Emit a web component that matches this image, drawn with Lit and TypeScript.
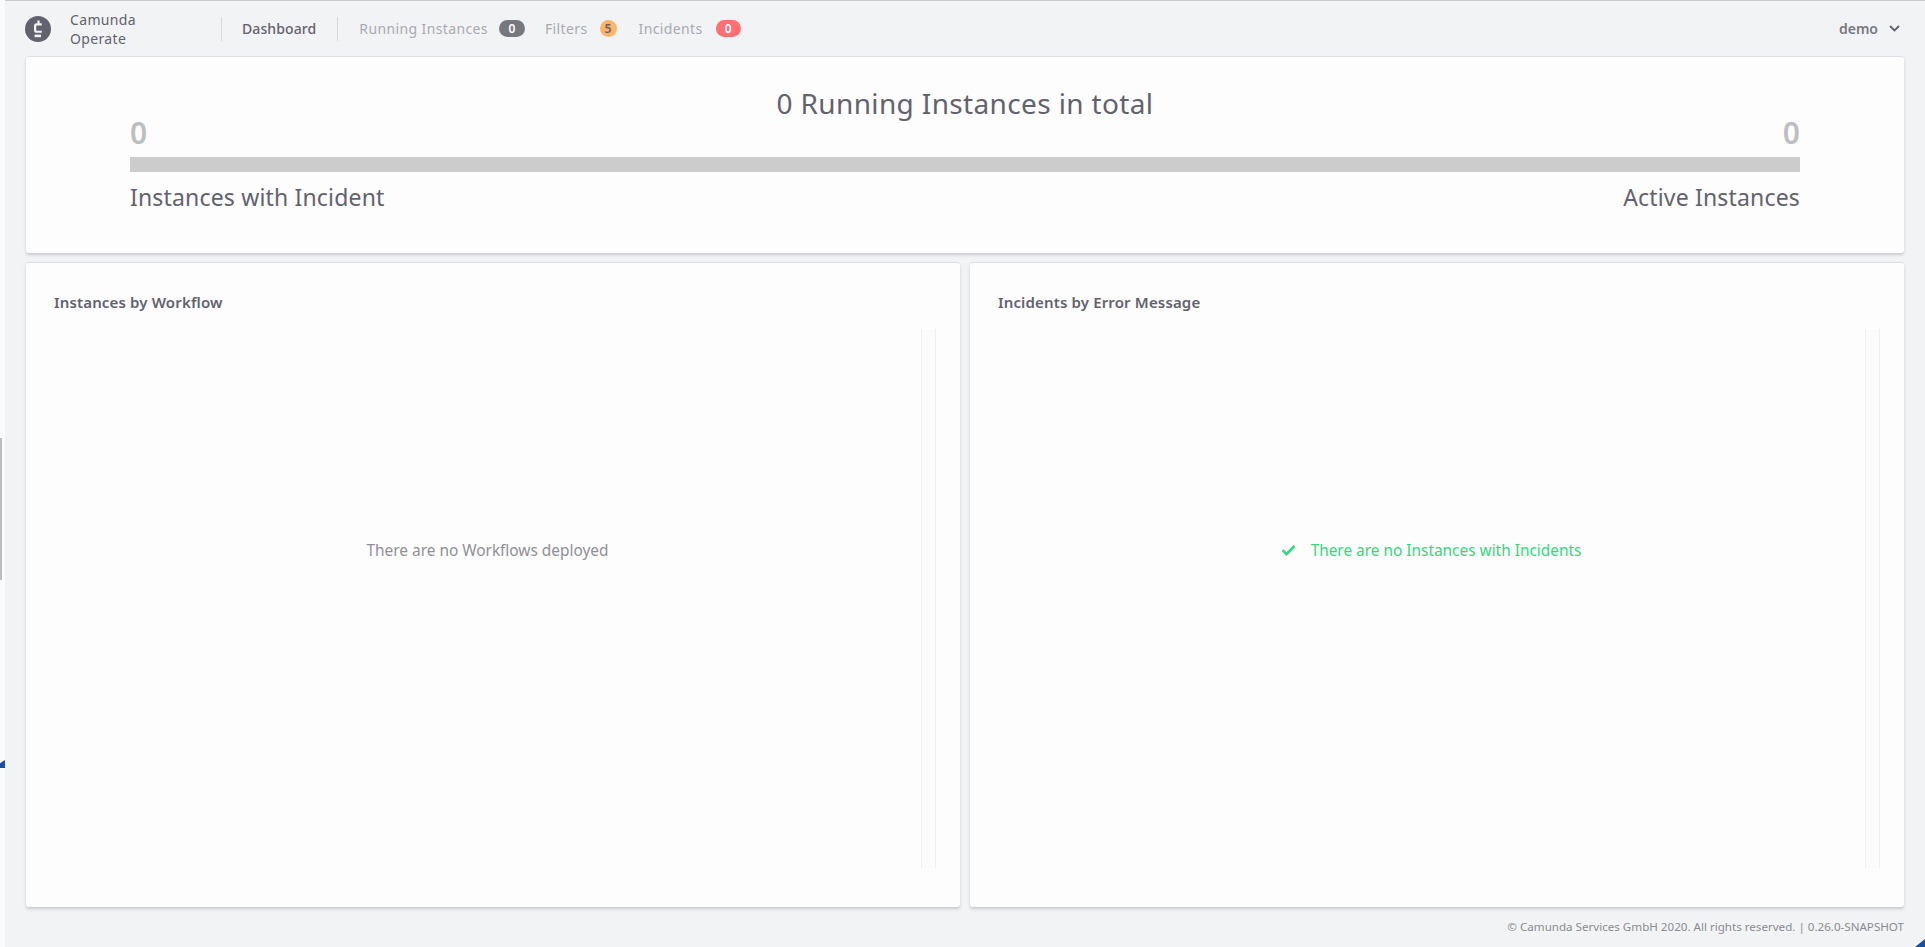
import { LitElement, html, css } from "lit";
import { customElement } from "lit/decorators.js";

@customElement("app-root")
export class AppRoot extends LitElement {
  static styles = css`
    :host { display: block; width: 1925px; height: 947px; overflow: hidden; position: relative; background: #fbfbfc; font-family: "Noto Sans", Roboto, sans-serif; color: #62626e; }
    * { box-sizing: border-box; }
    .window { margin-left: 5px; height: 947px; border-top: 1px solid #c9cacd; background: #f2f3f5; display: flex; flex-direction: column; padding: 0 21px; }
    header { height: 55px; display: flex; align-items: center; font-size: 14px; flex: none; }
    .logo { width: 26px; height: 26px; margin: 0 0 0 -1px; flex: none; display: block; }
    .brand { margin-left: 19px; width: 151px; line-height: 19px; font-size: 14px; letter-spacing: .35px; color: #62626e; }
    .sep { width: 1px; height: 24px; background: #d7d8dc; flex: none; }
    .dash { font-size: 14px; font-weight: 500; margin: 0 21px 0 20px; letter-spacing: .1px; color: #62626e; }
    .link { color: #a9aab1; letter-spacing: .38px; }
    .first { margin-left: 21px; }
    .badge { height: 17px; border-radius: 9px; display: flex; align-items: center; justify-content: center; font-size: 12px; font-weight: 600; color: #fff; flex: none; }
    .b1 { width: 26px; background: #77787d; margin-left: 11px; margin-right: 20px; }
    .b2 { width: 17px; background: #ffb366; color: #62626e; margin-left: 12px; margin-right: 22px; }
    .b3 { width: 25px; background: #ff6e72; margin-left: 13px; }
    .user { margin-left: auto; display: flex; align-items: center; gap: 11px; font-weight: 600; font-size: 14px; color: #77787f; padding-right: 4px; }
    .user svg { width: 11px; height: 7px; display: block; }
    main { display: flex; flex-direction: column; gap: 9px; flex: none; }
    .card { background: #fdfdfd; border-radius: 3px; border-top: 1px solid #dcdfe8; box-shadow: 0 2px 3px rgba(80, 85, 100, .25); }
    .summary { height: 197px; padding: 27px 104px 0 104px; }
    .title { text-align: center; font-size: 28px; line-height: 38px; letter-spacing: .36px; color: #62626e; }
    .nums { display: flex; justify-content: space-between; font-size: 30px; font-weight: 600; line-height: 32px; color: #bdbec1; margin-top: -5px; }
    .bar { height: 15px; background: #cccccd; margin-top: 8px; }
    .labels { display: flex; justify-content: space-between; font-size: 23px; line-height: 30px; letter-spacing: .17px; margin-top: 10px; color: #62626e; }
    .row { display: flex; gap: 10px; height: 645px; }
    .panel { flex: 1; position: relative; padding: 29px 0 0 28px; }
    h2 { margin: 0; font-size: 15px; font-weight: 600; line-height: 20px; letter-spacing: .15px; color: #62626e; }
    .track { position: absolute; top: 66px; right: 24px; width: 15px; height: 539px; background: #fbfbfb; border-left: 1px solid #efeff1; border-right: 1px solid #efeff1; }
    .msg { position: absolute; left: 0; right: 0; top: 275px; height: 24px; display: flex; justify-content: center; align-items: center; font-size: 15.4px; }
    .grey { color: #8f9096; padding-right: 11px; }
    .ok { color: #34d97b; gap: 15px; padding-right: 12px; }
    .ok svg { width: 15px; height: 12px; display: block; }
    footer { text-align: right; font-size: 11.6px; line-height: 16px; margin-top: 12px; color: #8a8b92; }
    .thumb { position: absolute; left: 0; top: 438px; width: 2px; height: 142px; background: #bdbdbd; }
    .corner { position: absolute; background: #1a4fa0; }
    .cl { left: 0; top: 760px; width: 5px; height: 8px; clip-path: polygon(0 40%, 100% 0, 100% 100%, 0 100%); }
    .cr { right: 0; bottom: 0; width: 10px; height: 8px; clip-path: polygon(100% 0, 100% 100%, 0 100%); }
  `;

  render() {
    return html`
      <div class="window">
        <header>
          <svg class="logo" viewBox="0 0 26 26">
            <circle cx="13" cy="13" r="13" fill="#62626e"></circle>
            <path d="M16.8 9.5V7.2H14.6V4.4H12.4V7.2H11.6C10 7.2 9 8.1 9 9.6V14.2C9 15.8 10 16.8 11.6 16.8H16.8V14.8H12.2C11.5 14.8 11.2 14.5 11.2 13.8V10.4C11.2 9.7 11.5 9.4 12.2 9.4Z" fill="#f2f3f5"></path>
            <rect x="9.6" y="18.6" width="6.4" height="2.6" fill="#f2f3f5"></rect>
          </svg>
          <div class="brand">Camunda<br />Operate</div>
          <div class="sep"></div>
          <div class="dash">Dashboard</div>
          <div class="sep"></div>
          <span class="link first">Running Instances</span>
          <span class="badge b1">0</span>
          <span class="link">Filters</span>
          <span class="badge b2">5</span>
          <span class="link">Incidents</span>
          <span class="badge b3">0</span>
          <div class="user">
            <span>demo</span>
            <svg viewBox="0 0 11 7"><path d="M1 1l4.5 4.5L10 1" fill="none" stroke="#62626e" stroke-width="1.8"></path></svg>
          </div>
        </header>
        <main>
          <section class="card summary">
            <div class="title">0 Running Instances in total</div>
            <div class="nums"><span>0</span><span>0</span></div>
            <div class="bar"></div>
            <div class="labels"><span>Instances with Incident</span><span>Active Instances</span></div>
          </section>
          <div class="row">
            <section class="card panel">
              <h2>Instances by Workflow</h2>
              <div class="track"></div>
              <div class="msg grey">There are no Workflows deployed</div>
            </section>
            <section class="card panel">
              <h2>Incidents by Error Message</h2>
              <div class="track"></div>
              <div class="msg ok">
                <svg viewBox="0 0 15 12"><path d="M1.5 6.2l4 4L13.5 2" fill="none" stroke="#34d97b" stroke-width="2.6"></path></svg>
                <span>There are no Instances with Incidents</span>
              </div>
            </section>
          </div>
        </main>
        <footer>© Camunda Services GmbH 2020. All rights reserved. | 0.26.0-SNAPSHOT</footer>
      </div>
      <div class="thumb"></div>
      <div class="corner cl"></div>
      <div class="corner cr"></div>
    `;
  }
}
